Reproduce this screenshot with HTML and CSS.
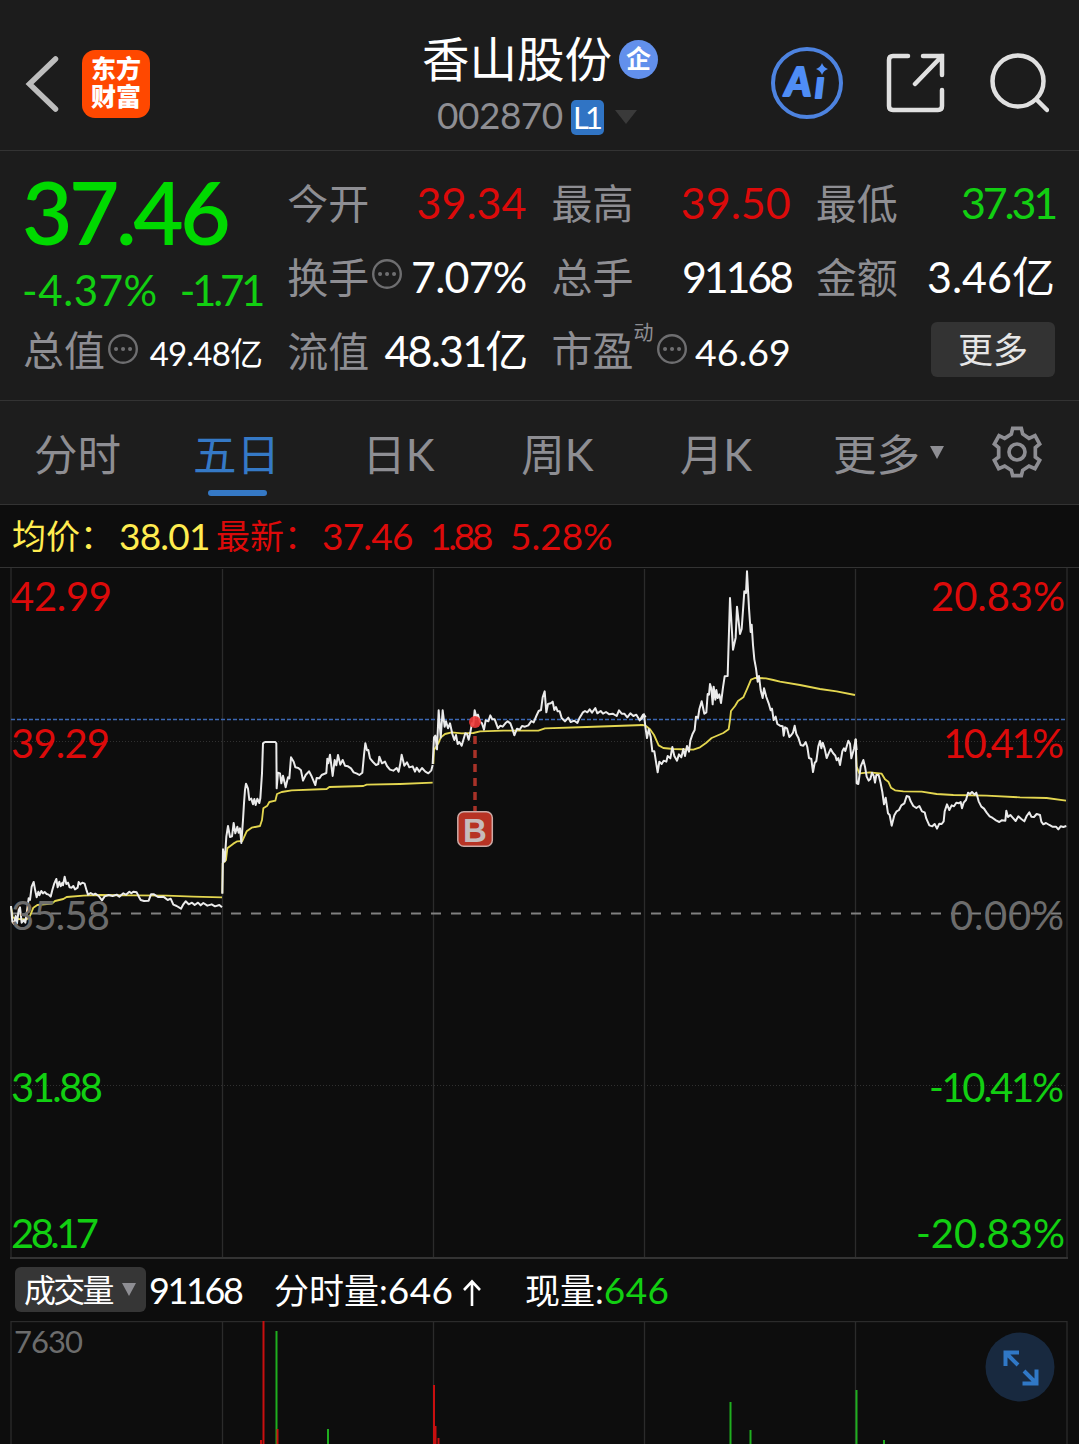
FILE: index.html
```
<!DOCTYPE html>
<html lang="zh-CN">
  <head>
    <meta charset="UTF-8" />
    <title>香山股份 002870</title>
    <meta name="viewport" content="width=device-width, initial-scale=1.0" />
    <link rel="stylesheet" href="styles.css">
  </head>
  <body>
    <header class="header">
      <div class="header-left">
        <svg class="back" viewBox="0 0 36 60">
          <path d="M31.5 5 L5.5 30 L31.5 55" />
        </svg>
        <div class="logo">东方<br />财富</div>
      </div>
      <div class="title">
        <div class="name">香山股份<span class="ent">企</span></div>
        <div class="code"><span class="code-num">002870</span><span class="level">L1</span><i class="caret dark"></i></div>
      </div>
      <div class="actions">
        <svg width="72" height="72" viewBox="0 0 72 72">
          <circle cx="36" cy="36" r="34" class="ai-ring" />
          <text x="14" y="49" class="ai-text">A</text>
          <text x="44" y="51" class="ai-text ai-i">ı</text>
          <path class="ai-star" d="M51 16 Q52.5 20.5 57 22 Q52.5 23.5 51 28 Q49.5 23.5 45 22 Q49.5 20.5 51 16Z" />
        </svg>
        <svg class="line-icon" width="60" height="60" viewBox="0 0 60 60">
          <path d="M22 3 H7 Q3 3 3 7 V53 Q3 57 7 57 H52 Q56 57 56 53 V37" />
          <path d="M37 3 H56 V22 M56 3 L29 31" />
        </svg>
        <svg class="line-icon" width="60" height="60" viewBox="-1 0 60 60">
          <circle cx="28" cy="28" r="25.5" />
          <path d="M46.5 46.5 L57 57" />
        </svg>
      </div>
    </header>

    <section class="quote">
      <div class="price-box">
        <div class="price">37.46</div>
        <div class="change"><span class="wide">-4.37%</span><span class="tighter">-1.71</span></div>
      </div>
      <div class="cell"><label>今开</label><b class="red">39.34</b></div>
      <div class="cell"><label>最高</label><b class="red">39.50</b></div>
      <div class="cell"><label>最低</label><b class="green tighter">37.31</b></div>
      <div class="cell"><label>换手</label><svg class="dots" viewBox="0 0 30 30"><circle cx="15" cy="15" r="13.8" /><path d="M8 15h.1M15 15h.1M22 15h.1" /></svg><b class="snug">7.07%</b></div>
      <div class="cell"><label>总手</label><b class="tighter">91168</b></div>
      <div class="cell"><label>金额</label><b>3.46亿</b></div>
      <div class="cell"><label>总值</label><svg class="dots" viewBox="0 0 30 30"><circle cx="15" cy="15" r="13.8" /><path d="M8 15h.1M15 15h.1M22 15h.1" /></svg><b class="small snug">49.48亿</b></div>
      <div class="cell"><label>流值</label><b class="tight">48.31亿</b></div>
      <div class="cell"><label>市盈</label><sup>动</sup><svg class="dots" viewBox="0 0 30 30"><circle cx="15" cy="15" r="13.8" /><path d="M8 15h.1M15 15h.1M22 15h.1" /></svg><b class="mid">46.69</b></div>
      <div class="cell"><button class="more-btn" type="button">更多</button></div>
    </section>

    <nav class="tabs">
      <a class="tab">分时</a>
      <a class="tab active">五日</a>
      <a class="tab">日K</a>
      <a class="tab">周K</a>
      <a class="tab">月K</a>
      <a class="tab">更多<i class="caret small-caret"></i></a>
      <svg class="gear" viewBox="1305 10 168 174">
        <path d="M1376 26 H1402 L1406 43 L1425 56 L1443 48 L1457 73 L1444 84 V112 L1457 122 L1443 147 L1425 139 L1406 152 L1402 168 H1376 L1372 152 L1352 139 L1334 147 L1321 122 L1334 112 V84 L1321 73 L1335 48 L1352 56 L1372 43 Z" />
        <circle cx="1389" cy="97" r="24" />
      </svg>
    </nav>

    <div class="avg-row">
      <span class="yellow">均价：</span>
      <span class="num yellow snug">38.01</span>
      <span class="red">最新：</span>
      <span class="num red snug">37.46</span>
      <span class="num red tighter">1.88</span>
      <span class="num red">5.28%</span>
    </div>

    <svg class="chart" viewBox="0 568 1079 691">
      <!-- grid -->
      <path class="grid" d="M11 568 V1258 M222.5 569 V1258 M433.5 569 V1258 M644.5 569 V1258 M855.5 569 V1258 M1067 568 V1258" />
      <path class="frame" d="M10 1258 H1068" />
      <path class="dotted" d="M11 741.5 H1067 M11 1085.5 H1067" />
      <path class="zero" d="M11 913.5 H1062" />
      <path class="cost" d="M11 719.5 H1066" />

      <!-- average lines -->
      <g class="avg">
        <path transform="translate(0 720) scale(.33333)" d="M33 560 L38 592 L50 597 L80 598 L90 588 L100 563 L112 555 L155 551 L165 543 L190 537 L200 531 L250 527 L300 525 L400 526 L500 527 L580 530 L666 532" />
        <path transform="translate(0 720) scale(.33333)" d="M667 520 L668 430 L678 420 L682 385 L700 371 L712 364 L727 363 L740 334 L755 323 L780 318 L786 300 L790 265 L802 257 L808 246 L826 242 L831 222 L845 216 L875 211 L980 207 L988 201 L1090 198 L1100 194 L1200 192 L1298 188" />
        <path transform="translate(420 660) scale(.33333)" d="M40 312 L42 270 L55 250 L62 233 L75 222 L95 217 L125 220 L160 219 L180 214 L250 212 L355 212 L375 205 L500 201 L670 195" />
        <path transform="translate(640 560) scale(.33333)" d="M0 495 L15 496 L30 508 L42 525 L56 556 L70 564 L100 567 L160 569 L180 562 L198 549 L215 534 L250 519 L266 508 L270 480 L273 453 L285 438 L294 423 L310 412 L322 385 L333 359 L345 354 L378 355 L400 360 L420 365 L480 375 L540 387 L590 394 L645 405" />
        <path transform="translate(840 680) scale(.33333)" d="M47 178 L50 260 L58 280 L90 277 L125 281 L135 298 L145 305 L153 323 L165 331 L190 334 L245 335 L290 342 L340 345 L440 347 L540 352 L620 354 L678 362" />
      </g>

      <!-- price lines -->
      <g class="price-line">
        <path transform="translate(0 720) scale(.33333)" d="M33 558 L37 605 L42 612 L47 588 L51 610 L56 570 L60 562 L65 608 L72 600 L76 608 L80 580 L86 535 L90 540 L95 500 L101 486 L105 508 L110 532 L115 515 L118 526 L124 513 L129 520 L134 516 L140 522 L146 524 L152 530 L157 510 L163 490 L169 477 L173 502 L178 485 L182 499 L187 488 L189 496 L194 470 L199 492 L204 488 L209 502 L215 503 L220 498 L225 508 L233 503 L236 486 L241 493 L247 488 L254 491 L260 512 L264 524 L272 519 L280 524 L286 521 L296 528 L306 541 L314 529 L326 525 L338 528 L350 524 L358 530 L370 520 L378 524 L388 515 L394 520 L400 515 L410 517 L417 531 L422 540 L432 543 L446 542 L453 523 L462 523 L474 531 L490 530 L503 540 L512 536 L520 554 L530 558 L543 566 L550 553 L557 544 L566 553 L576 548 L584 555 L594 548 L602 556 L610 549 L622 557 L635 553 L645 559 L658 555 L666 562" />
        <path transform="translate(0 720) scale(.33333)" d="M667 521 L669 388 L674 424 L679 350 L684 318 L690 351 L696 349 L701 309 L706 340 L712 320 L716 338 L720 325 L724 369 L729 300 L732 250 L735 210 L738 191 L744 206 L748 240 L754 236 L759 253 L763 237 L767 255 L772 236 L778 249 L781 235 L786 160 L789 70 L795 66 L826 66 L829 70 L830 205 L834 158 L840 160 L844 190 L849 167 L857 202 L864 172 L868 175 L873 112 L881 125 L886 142 L895 144 L903 151 L909 182 L917 165 L927 154 L934 167 L939 179 L946 195 L950 174 L958 175 L965 165 L979 159 L982 116 L985 130 L990 104 L998 168 L1004 120 L1009 136 L1014 105 L1021 134 L1028 120 L1035 137 L1044 139 L1053 145 L1061 157 L1071 161 L1078 165 L1087 158 L1092 105 L1096 70 L1101 91 L1105 90 L1110 115 L1119 126 L1128 135 L1135 132 L1138 110 L1146 130 L1155 125 L1161 138 L1170 149 L1180 152 L1190 144 L1196 155 L1201 130 L1205 104 L1213 137 L1221 127 L1228 142 L1238 139 L1245 155 L1250 143 L1258 155 L1266 144 L1276 155 L1285 160 L1294 151 L1298 135" />
        <path transform="translate(420 660) scale(.33333)" d="M38 312 L42 232 L46 227 L51 268 L56 151 L62 233 L68 151 L74 200 L78 184 L84 205 L90 190 L97 222 L103 240 L108 225 L113 252 L118 246 L125 257 L130 240 L136 220 L141 222 L146 239 L151 217 L156 190 L160 195 L164 151 L169 170 L174 164 L180 185 L186 190 L192 209 L197 181 L205 184 L211 166 L217 178 L224 178 L234 205 L241 197 L248 200 L256 190 L263 184 L271 190 L277 206 L283 226 L291 206 L299 209 L306 198 L315 200 L325 196 L334 183 L341 187 L349 168 L356 153 L363 150 L368 112 L374 94 L379 157 L384 132 L392 130 L398 125 L403 150 L408 141 L413 154 L419 154 L425 174 L435 184 L445 173 L452 186 L463 182 L472 189 L479 173 L488 158 L495 153 L502 157 L509 148 L516 158 L526 144 L532 160 L542 153 L549 161 L558 156 L568 163 L578 161 L590 168 L597 151 L605 161 L613 161 L622 172 L631 160 L640 168 L649 164 L659 181 L666 175 L672 164 L677 172" />
        <path transform="translate(640 560) scale(.33333)" d="M0 480 L9 464 L12 463 L16 500 L21 534 L26 508 L32 530 L37 574 L43 574 L53 637 L58 605 L65 612 L71 602 L79 605 L83 588 L91 595 L97 561 L103 588 L111 602 L117 583 L124 592 L130 567 L135 588 L141 558 L147 575 L151 542 L158 521 L164 510 L168 470 L174 474 L178 448 L185 424 L193 461 L199 457 L203 402 L207 404 L210 372 L214 385 L218 433 L221 380 L226 419 L229 390 L233 414 L238 403 L243 429 L249 382 L254 349 L263 348 L270 114 L279 269 L287 233 L291 140 L300 222 L305 207 L313 94 L318 99 L321 34 L327 145 L332 216 L335 194 L339 255 L343 298 L348 325 L353 365 L357 348 L362 390 L368 414 L372 385 L379 411 L386 430 L392 451 L396 446 L401 480 L407 470 L412 492 L420 497 L428 499 L431 527 L435 502 L441 505 L448 531 L454 525 L459 518 L464 497 L469 522 L475 533 L482 555 L490 557 L497 546 L502 561 L507 594 L514 597 L519 636 L524 609 L529 603 L535 559 L540 543 L544 565 L548 548 L554 566 L560 594 L566 580 L572 567 L579 579 L586 587 L590 601 L595 594 L600 615 L607 574 L612 565 L616 573 L625 542 L630 551 L634 595 L642 566 L647 538 L650 570" />
        <path transform="translate(840 680) scale(.33333)" d="M47 178 L50 310 L55 312 L62 260 L70 240 L75 260 L80 290 L86 302 L91 297 L96 278 L101 287 L105 308 L109 285 L116 285 L122 310 L127 336 L132 373 L137 353 L144 400 L149 405 L155 437 L163 406 L170 394 L177 390 L184 376 L193 370 L200 348 L207 350 L212 364 L220 378 L229 384 L238 378 L246 394 L254 397 L259 416 L268 436 L277 439 L284 432 L291 446 L298 431 L305 432 L311 424 L314 394 L321 373 L328 390 L335 376 L342 379 L349 368 L357 370 L362 366 L366 385 L371 368 L378 360 L384 338 L390 342 L396 336 L404 344 L409 338 L416 364 L424 380 L432 386 L440 398 L449 409 L458 414 L468 421 L478 426 L485 421 L496 422 L499 392 L504 411 L511 405 L518 413 L527 423 L535 409 L544 417 L553 424 L560 408 L568 397 L574 410 L582 411 L590 402 L600 405 L604 425 L610 433 L618 429 L628 435 L637 440 L648 440 L655 448 L662 439 L670 441 L679 438" />
      </g>

      <!-- axis labels -->
      <g class="axis">
        <text class="up" x="11" y="611" textLength="101">42.99</text>
        <text class="up" x="11" y="758" textLength="99">39.29</text>
        <text class="flat" x="11" y="930" textLength="99">35.58</text>
        <text class="down" x="11" y="1102" textLength="92">31.88</text>
        <text class="down" x="11" y="1248" textLength="88">28.17</text>
        <text class="up" x="931" y="611" textLength="134">20.83%</text>
        <text class="up" x="943" y="758" textLength="121">10.41%</text>
        <text class="flat" x="950" y="930" textLength="114">0.00%</text>
        <text class="down" x="929" y="1102" textLength="135">-10.41%</text>
        <text class="down" x="916" y="1248" textLength="149">-20.83%</text>
      </g>

      <!-- buy marker -->
      <path class="buy-line" d="M475 736 V811" />
      <circle class="buy-dot" cx="475" cy="722" r="6" />
      <rect class="buy-box" x="457.8" y="811.8" width="34.5" height="34.5" rx="6" />
      <text class="buy-text" x="475" y="841.5">B</text>
    </svg>

    <div class="vol-row">
      <button class="vol-btn" type="button"><span>成交量</span><i class="caret small-caret"></i></button>
      <span class="vol-total">91168</span>
      <span class="vol-min">分时量:<em>646</em><svg class="arrow" viewBox="0 0 20 28"><path d="M10 27 V3 M2 11 L10 2.500 L18 11" /></svg></span>
      <span class="vol-now">现量:<em class="green">646</em></span>
    </div>

    <div class="volume">
      <svg class="volume-chart" viewBox="0 1321 1079 123">
        <path class="grid" d="M11 1444 V1321.5 H1067 V1444 M222.5 1321 V1444 M433.5 1321 V1444 M644.5 1321 V1444 M855.5 1321 V1444" />
        <path class="bar-down" d="M276.5 1331 V1444 M328 1429 V1444 M730.5 1402 V1444 M750.5 1430 V1444 M856.5 1390 V1444 M884 1440 V1444" />
        <path class="bar-up" d="M261 1440 V1444 M263.5 1321 V1444 M277.5 1429 V1444 M434 1385 V1444 M435.5 1426 V1444 M438.5 1438 V1444" />
        <text class="vol-max" x="14" y="1353" textLength="69">7630</text>
      </svg>
      <svg class="expand" viewBox="0 0 70 70">
        <circle cx="35" cy="35" r="34.5" />
        <path d="M34 20.5 H20.5 V34 M20.5 20.5 L33 33 M37.5 51.5 H51.5 V37.5 M51.5 51.5 L39 39" />
      </svg>
    </div>
  </body>
</html>
```
FILE: styles.css
```
* {
  box-sizing: border-box;
}
body {
  margin: 0;
  width: 1079px;
  height: 1444px;
  overflow: hidden;
  background: #0d0d0d;
  color: #fff;
  font-family: Lato, "Noto Sans CJK SC", sans-serif;
}
svg {
  display: block;
  fill: none;
}
.red {
  color: #dc0a0a;
}
.green {
  color: #12cf12;
}
.yellow {
  color: #ffec50;
}
.caret {
  display: inline-block;
  border-left: 11px solid transparent;
  border-right: 11px solid transparent;
  border-top: 14px solid #8e8e93;
}
.caret.dark {
  border-top-color: #3a3a3a;
}
.caret.small-caret {
  border-left-width: 7.5px;
  border-right-width: 7.5px;
  border-top-width: 13px;
}

/* header */
.header {
  display: grid;
  grid-template-columns: 360px 360px 1fr;
  height: 151px;
  background: #1c1c1c;
  border-bottom: 1px solid #333;
}
.header-left {
  display: flex;
  align-items: center;
  gap: 22px;
  padding: 17px 0 0 24px;
}
.back {
  width: 36px;
  height: 60px;
  stroke: #bdbdbd;
  stroke-width: 5.5;
  stroke-linecap: round;
}
.logo {
  width: 68px;
  height: 68px;
  padding-top: 4px;
  border-radius: 13px;
  background: #ff4800;
  font-size: 25px;
  font-weight: 900;
  line-height: 28px;
  text-align: center;
}
.title {
  padding-top: 29px;
}
.name {
  display: flex;
  align-items: center;
  justify-content: center;
  gap: 7px;
  height: 60px;
  font-size: 47.5px;
  line-height: 60px;
}
.ent {
  width: 39px;
  height: 39px;
  border-radius: 50%;
  background: #6290ec;
  font-size: 25px;
  font-weight: bold;
  line-height: 36px;
  text-align: center;
}
.code {
  display: flex;
  align-items: center;
  height: 56px;
  padding-left: 77px;
  color: #8e8e93;
  font-size: 37px;
}
.code-num {
  width: 134px;
  line-height: 52px;
  height: 56px;
  letter-spacing: -0.5px;
}
.level {
  width: 33px;
  height: 35px;
  margin-right: 11px;
  border-radius: 5px;
  background: #3074c4;
  color: #fff;
  font-size: 31px;
  line-height: 35px;
  letter-spacing: -4px;
  text-indent: -3px;
  text-align: center;
}
.actions {
  display: flex;
  align-items: center;
  padding: 16px 0 0 51px;
  gap: 43px;
}
.ai-ring {
  stroke: #4d83e0;
  stroke-width: 4;
}
.ai-text {
  fill: #4f8df5;
  stroke: #4f8df5;
  stroke-width: 2;
  stroke-linejoin: round;
  font-size: 40px;
  font-weight: 900;
  font-style: italic;
}
.ai-i {
  font-size: 38px;
}
.ai-star {
  fill: #4f8df5;
}
.line-icon {
  stroke: #e0e0e0;
  stroke-width: 4.5;
  stroke-linecap: round;
}

/* quote numbers */
.quote {
  display: grid;
  grid-template-columns: repeat(4, 1fr);
  grid-template-rows: 74px 74px 76px;
  column-gap: 26px;
  height: 250px;
  padding: 15px 24px 0;
  background: #1c1c1c;
  border-bottom: 1px solid #333;
}
.price-box {
  grid-row: span 2;
}
.price {
  height: 98px;
  margin-left: -2px;
  color: #00d900;
  font-size: 87px;
  font-weight: 600;
  line-height: 92px;
  letter-spacing: -3.4px;
}
.change {
  display: flex;
  justify-content: space-between;
  color: #12cf12;
  font-size: 42px;
  line-height: 52px;
}
.change .wide {
  margin-left: -2px;
  letter-spacing: 0.6px;
}
.cell {
  display: flex;
  align-items: baseline;
  line-height: 74px;
  white-space: nowrap;
}
.cell label {
  margin-left: -1px;
  color: #8e8e93;
  font-size: 41px;
}
.cell b {
  margin-left: auto;
  font-size: 43px;
  font-weight: normal;
}
.cell b.small {
  font-size: 33px;
}
.cell b.mid {
  font-size: 37.5px;
}
.snug {
  letter-spacing: -0.8px;
}
.tight {
  letter-spacing: -1.8px;
}
.tighter {
  letter-spacing: -3.2px;
}
.dots {
  align-self: center;
  width: 30px;
  height: 30px;
  margin: 0 0 6px 3px;
  stroke: #6e6e70;
  stroke-width: 2.4;
}
.dots path {
  stroke-width: 4;
  stroke-linecap: round;
}
.cell sup {
  align-self: flex-start;
  width: 20px;
  color: #8e8e93;
  font-size: 20px;
  line-height: 36px;
}
.more-btn {
  align-self: center;
  width: 124px;
  height: 55px;
  margin: 0 0 6px auto;
  padding: 0;
  border: none;
  border-radius: 6px;
  background: #333;
  color: #e6e6e6;
  font-family: inherit;
  font-size: 35px;
  line-height: 53px;
}

/* tabs */
.tabs {
  display: grid;
  grid-template-columns: 155px 163px 161px 157px 160px 185px 72px;
  height: 104px;
  background: #1d1d1d;
  border-bottom: 1px solid #333;
}
.tab {
  position: relative;
  color: #8e8e93;
  font-size: 43.5px;
  line-height: 106px;
  text-align: center;
  white-space: nowrap;
}
.tab.active {
  color: #3579c6;
}
.tab.active::after {
  content: "";
  position: absolute;
  left: 53px;
  bottom: 11px;
  width: 59px;
  height: 6px;
  border-radius: 3px;
  background: #3579c6;
}
.tab .caret {
  margin: 0 0 14px 10px;
  vertical-align: middle;
}
.gear {
  width: 56px;
  height: 58px;
  margin: 22px 8px 0;
  stroke: #8e8e93;
  stroke-width: 11;
}

/* average / latest */
.avg-row {
  display: grid;
  grid-template-columns: 107px 97px 106px 108px 80px 120px;
  height: 63px;
  padding-left: 12px;
  border-bottom: 1px solid #333;
  font-size: 34px;
  line-height: 62px;
  white-space: nowrap;
}
.avg-row .num {
  font-size: 37px;
}

/* price chart */
.chart {
  width: 1079px;
  height: 691px;
}
.grid {
  stroke: #2b2b2b;
  stroke-width: 1.3;
}
.frame {
  stroke: #333;
  stroke-width: 2;
}
.dotted {
  stroke: #303030;
  stroke-dasharray: 1 2;
}
.zero {
  stroke: #808080;
  stroke-width: 2;
  stroke-dasharray: 10 10;
}
.cost {
  stroke: #3c68b4;
  stroke-width: 1.3;
  stroke-dasharray: 4 2;
}
.avg {
  stroke: #e3d650;
  stroke-width: 5.5;
  stroke-linejoin: round;
}
.price-line {
  stroke: #ebebeb;
  stroke-width: 6;
  stroke-linejoin: round;
}
.axis {
  font-size: 40px;
}
.up {
  fill: #dc0a0a;
}
.flat {
  fill: #6c6c6c;
}
.down {
  fill: #12cf12;
}
.buy-line {
  stroke: #a83228;
  stroke-width: 3.5;
  stroke-dasharray: 8 6;
}
.buy-dot {
  fill: #ee3a38;
  opacity: 0.9;
}
.buy-box {
  fill: #b73324;
  stroke: #ccaaa6;
  stroke-width: 1.5;
}
.buy-text {
  fill: #c6bcbc;
  font: bold 33px "Liberation Sans", sans-serif;
  text-anchor: middle;
}

/* volume */
.vol-row {
  display: grid;
  grid-template-columns: 131px 128px 251px 200px;
  align-items: center;
  height: 62px;
  padding: 0 0 0 15px;
  font-size: 36px;
  line-height: 60px;
  white-space: nowrap;
}
.vol-btn {
  display: flex;
  align-items: center;
  gap: 10px;
  height: 45px;
  margin-top: -1px;
  padding: 0 0 0 9px;
  border: none;
  border-radius: 6px;
  background: #363636;
  color: #fff;
  font-family: inherit;
  font-size: 32px;
  line-height: 44px;
  letter-spacing: -2.7px;
}
.vol-total {
  padding-left: 3px;
  letter-spacing: -2.4px;
}
.vol-min,
.vol-now {
  font-size: 35px;
}
.vol-row em {
  font-size: 37px;
  font-style: normal;
  letter-spacing: 0.4px;
}
.arrow {
  display: inline-block;
  width: 20px;
  height: 28px;
  margin-left: 9px;
  vertical-align: -3px;
  stroke: #fff;
  stroke-width: 2.6;
}
.volume {
  position: relative;
  height: 123px;
}
.volume-chart {
  width: 1079px;
  height: 123px;
}
.bar-up {
  stroke: #c80f0f;
  stroke-width: 2;
}
.bar-down {
  stroke: #1fae1f;
  stroke-width: 2;
}
.vol-max {
  fill: #6c6c6c;
  font-size: 31px;
}
.expand {
  position: absolute;
  right: 24px;
  top: 11px;
  width: 70px;
  height: 70px;
}
.expand circle {
  fill: #18293f;
}
.expand path {
  stroke: #3078c6;
  stroke-width: 4;
}
```
